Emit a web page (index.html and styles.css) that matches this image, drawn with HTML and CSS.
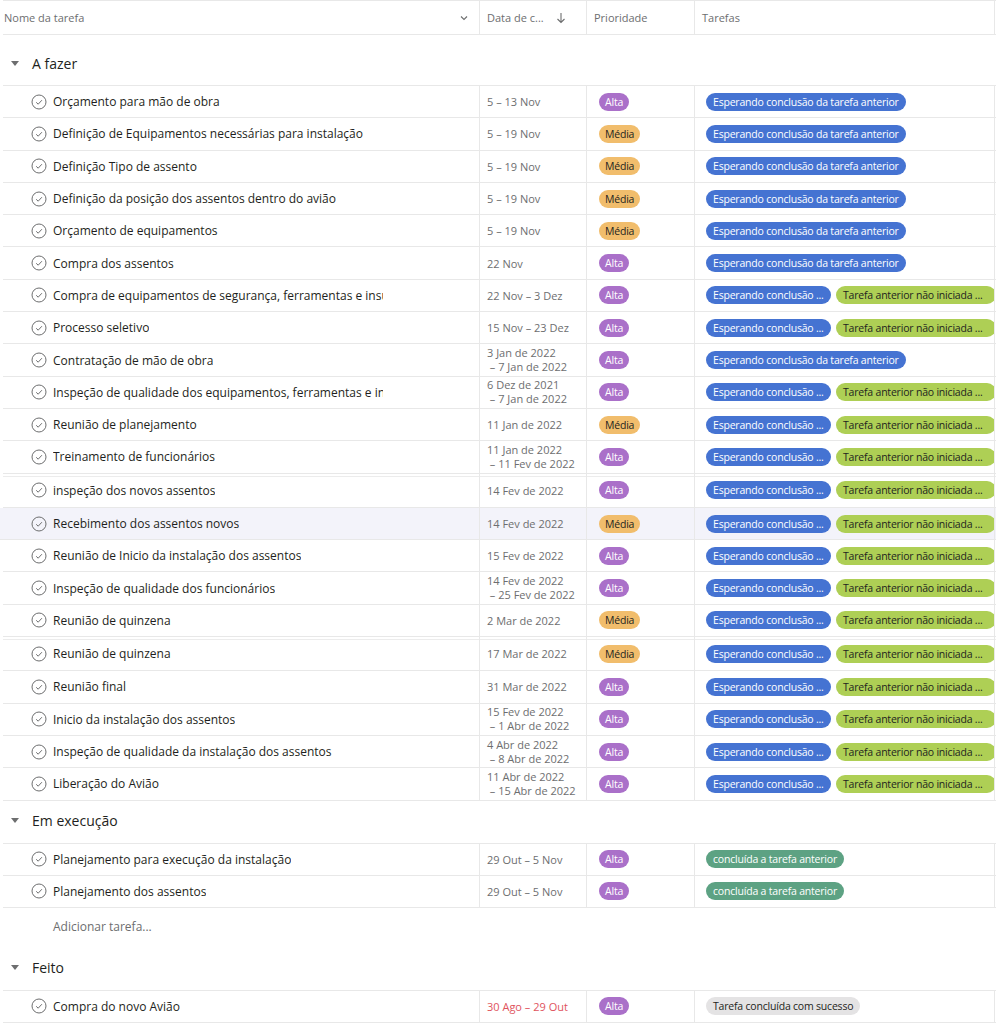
FILE: index.html
```
<!DOCTYPE html>
<html lang="pt">
<head>
<meta charset="utf-8">
<title>Tarefas</title>
<link rel="stylesheet" href="styles.css">
</head>
<body>
<div class="board">
  <div class="head">
    <div class="hcell hname">Nome da tarefa
      <svg class="chev" width="10" height="10" viewBox="0 0 10 10"><path d="M2 3.5 L5 6.5 L8 3.5" fill="none" stroke="#6d6e6f" stroke-width="1.1"/></svg>
    </div>
    <div class="hcell hdate">Data de c...
      <svg class="arrow" width="10" height="12" viewBox="0 0 10 12"><path d="M5 1 V10.5 M1.5 7 L5 10.5 L8.5 7" fill="none" stroke="#6d6e6f" stroke-width="1.1"/></svg>
    </div>
    <div class="hcell">Prioridade</div>
    <div class="hcell hlast">Tarefas</div>
  </div>

  <section class="group first">
    <div class="ghead"><span class="caret"></span>A fazer</div>
    <div class="rows dense">
      <div class="row"><div class="c name"><svg class="chk" viewBox="0 0 16 16"><circle cx="8" cy="8" r="7" fill="none" stroke="#6d6e6f"/><path d="M5.2 8.3 L7.2 10.2 L10.9 6.2" fill="none" stroke="#6d6e6f"/></svg><span class="t">Orçamento para mão de obra</span></div><div class="c date">5 – 13 Nov</div><div class="c pri"><span class="pill alta">Alta</span></div><div class="c tags"><span class="pill blue">Esperando conclusão da tarefa anterior</span></div></div>
      <div class="row"><div class="c name"><svg class="chk" viewBox="0 0 16 16"><circle cx="8" cy="8" r="7" fill="none" stroke="#6d6e6f"/><path d="M5.2 8.3 L7.2 10.2 L10.9 6.2" fill="none" stroke="#6d6e6f"/></svg><span class="t">Definição de Equipamentos necessárias para instalação</span></div><div class="c date">5 – 19 Nov</div><div class="c pri"><span class="pill media">Média</span></div><div class="c tags"><span class="pill blue">Esperando conclusão da tarefa anterior</span></div></div>
      <div class="row"><div class="c name"><svg class="chk" viewBox="0 0 16 16"><circle cx="8" cy="8" r="7" fill="none" stroke="#6d6e6f"/><path d="M5.2 8.3 L7.2 10.2 L10.9 6.2" fill="none" stroke="#6d6e6f"/></svg><span class="t">Definição Tipo de assento</span></div><div class="c date">5 – 19 Nov</div><div class="c pri"><span class="pill media">Média</span></div><div class="c tags"><span class="pill blue">Esperando conclusão da tarefa anterior</span></div></div>
      <div class="row"><div class="c name"><svg class="chk" viewBox="0 0 16 16"><circle cx="8" cy="8" r="7" fill="none" stroke="#6d6e6f"/><path d="M5.2 8.3 L7.2 10.2 L10.9 6.2" fill="none" stroke="#6d6e6f"/></svg><span class="t">Definição da posição dos assentos dentro do avião</span></div><div class="c date">5 – 19 Nov</div><div class="c pri"><span class="pill media">Média</span></div><div class="c tags"><span class="pill blue">Esperando conclusão da tarefa anterior</span></div></div>
      <div class="row"><div class="c name"><svg class="chk" viewBox="0 0 16 16"><circle cx="8" cy="8" r="7" fill="none" stroke="#6d6e6f"/><path d="M5.2 8.3 L7.2 10.2 L10.9 6.2" fill="none" stroke="#6d6e6f"/></svg><span class="t">Orçamento de equipamentos</span></div><div class="c date">5 – 19 Nov</div><div class="c pri"><span class="pill media">Média</span></div><div class="c tags"><span class="pill blue">Esperando conclusão da tarefa anterior</span></div></div>
      <div class="row"><div class="c name"><svg class="chk" viewBox="0 0 16 16"><circle cx="8" cy="8" r="7" fill="none" stroke="#6d6e6f"/><path d="M5.2 8.3 L7.2 10.2 L10.9 6.2" fill="none" stroke="#6d6e6f"/></svg><span class="t">Compra dos assentos</span></div><div class="c date">22 Nov</div><div class="c pri"><span class="pill alta">Alta</span></div><div class="c tags"><span class="pill blue">Esperando conclusão da tarefa anterior</span></div></div>
      <div class="row"><div class="c name"><svg class="chk" viewBox="0 0 16 16"><circle cx="8" cy="8" r="7" fill="none" stroke="#6d6e6f"/><path d="M5.2 8.3 L7.2 10.2 L10.9 6.2" fill="none" stroke="#6d6e6f"/></svg><span class="t">Compra de equipamentos de segurança, ferramentas e insumos</span></div><div class="c date">22 Nov – 3 Dez</div><div class="c pri"><span class="pill alta">Alta</span></div><div class="c tags"><span class="pill blue short">Esperando conclusão ...</span><span class="pill lime">Tarefa anterior não iniciada ...</span></div></div>
      <div class="row"><div class="c name"><svg class="chk" viewBox="0 0 16 16"><circle cx="8" cy="8" r="7" fill="none" stroke="#6d6e6f"/><path d="M5.2 8.3 L7.2 10.2 L10.9 6.2" fill="none" stroke="#6d6e6f"/></svg><span class="t">Processo seletivo</span></div><div class="c date">15 Nov – 23 Dez</div><div class="c pri"><span class="pill alta">Alta</span></div><div class="c tags"><span class="pill blue short">Esperando conclusão ...</span><span class="pill lime">Tarefa anterior não iniciada ...</span></div></div>
      <div class="row"><div class="c name"><svg class="chk" viewBox="0 0 16 16"><circle cx="8" cy="8" r="7" fill="none" stroke="#6d6e6f"/><path d="M5.2 8.3 L7.2 10.2 L10.9 6.2" fill="none" stroke="#6d6e6f"/></svg><span class="t">Contratação de mão de obra</span></div><div class="c date two">3 Jan de 2022<br>&nbsp;– 7 Jan de 2022</div><div class="c pri"><span class="pill alta">Alta</span></div><div class="c tags"><span class="pill blue">Esperando conclusão da tarefa anterior</span></div></div>
      <div class="row"><div class="c name"><svg class="chk" viewBox="0 0 16 16"><circle cx="8" cy="8" r="7" fill="none" stroke="#6d6e6f"/><path d="M5.2 8.3 L7.2 10.2 L10.9 6.2" fill="none" stroke="#6d6e6f"/></svg><span class="t">Inspeção de qualidade dos equipamentos, ferramentas e insumos</span></div><div class="c date two">6 Dez de 2021<br>&nbsp;– 7 Jan de 2022</div><div class="c pri"><span class="pill alta">Alta</span></div><div class="c tags"><span class="pill blue short">Esperando conclusão ...</span><span class="pill lime">Tarefa anterior não iniciada ...</span></div></div>
      <div class="row"><div class="c name"><svg class="chk" viewBox="0 0 16 16"><circle cx="8" cy="8" r="7" fill="none" stroke="#6d6e6f"/><path d="M5.2 8.3 L7.2 10.2 L10.9 6.2" fill="none" stroke="#6d6e6f"/></svg><span class="t">Reunião de planejamento</span></div><div class="c date">11 Jan de 2022</div><div class="c pri"><span class="pill media">Média</span></div><div class="c tags"><span class="pill blue short">Esperando conclusão ...</span><span class="pill lime">Tarefa anterior não iniciada ...</span></div></div>
      <div class="row"><div class="c name"><svg class="chk" viewBox="0 0 16 16"><circle cx="8" cy="8" r="7" fill="none" stroke="#6d6e6f"/><path d="M5.2 8.3 L7.2 10.2 L10.9 6.2" fill="none" stroke="#6d6e6f"/></svg><span class="t">Treinamento de funcionários</span></div><div class="c date two">11 Jan de 2022<br>&nbsp;– 11 Fev de 2022</div><div class="c pri"><span class="pill alta">Alta</span></div><div class="c tags"><span class="pill blue short">Esperando conclusão ...</span><span class="pill lime">Tarefa anterior não iniciada ...</span></div></div>
      <div class="row seam"><div class="c name"><svg class="chk" viewBox="0 0 16 16"><circle cx="8" cy="8" r="7" fill="none" stroke="#6d6e6f"/><path d="M5.2 8.3 L7.2 10.2 L10.9 6.2" fill="none" stroke="#6d6e6f"/></svg><span class="t">inspeção dos novos assentos</span></div><div class="c date">14 Fev de 2022</div><div class="c pri"><span class="pill alta">Alta</span></div><div class="c tags"><span class="pill blue short">Esperando conclusão ...</span><span class="pill lime">Tarefa anterior não iniciada ...</span></div></div>
      <div class="row hover"><div class="c name"><svg class="chk" viewBox="0 0 16 16"><circle cx="8" cy="8" r="7" fill="none" stroke="#6d6e6f"/><path d="M5.2 8.3 L7.2 10.2 L10.9 6.2" fill="none" stroke="#6d6e6f"/></svg><span class="t">Recebimento dos assentos novos</span></div><div class="c date">14 Fev de 2022</div><div class="c pri"><span class="pill media">Média</span></div><div class="c tags"><span class="pill blue short">Esperando conclusão ...</span><span class="pill lime">Tarefa anterior não iniciada ...</span></div></div>
      <div class="row"><div class="c name"><svg class="chk" viewBox="0 0 16 16"><circle cx="8" cy="8" r="7" fill="none" stroke="#6d6e6f"/><path d="M5.2 8.3 L7.2 10.2 L10.9 6.2" fill="none" stroke="#6d6e6f"/></svg><span class="t">Reunião de Inicio da instalação dos assentos</span></div><div class="c date">15 Fev de 2022</div><div class="c pri"><span class="pill alta">Alta</span></div><div class="c tags"><span class="pill blue short">Esperando conclusão ...</span><span class="pill lime">Tarefa anterior não iniciada ...</span></div></div>
      <div class="row"><div class="c name"><svg class="chk" viewBox="0 0 16 16"><circle cx="8" cy="8" r="7" fill="none" stroke="#6d6e6f"/><path d="M5.2 8.3 L7.2 10.2 L10.9 6.2" fill="none" stroke="#6d6e6f"/></svg><span class="t">Inspeção de qualidade dos funcionários</span></div><div class="c date two">14 Fev de 2022<br>&nbsp;– 25 Fev de 2022</div><div class="c pri"><span class="pill alta">Alta</span></div><div class="c tags"><span class="pill blue short">Esperando conclusão ...</span><span class="pill lime">Tarefa anterior não iniciada ...</span></div></div>
      <div class="row"><div class="c name"><svg class="chk" viewBox="0 0 16 16"><circle cx="8" cy="8" r="7" fill="none" stroke="#6d6e6f"/><path d="M5.2 8.3 L7.2 10.2 L10.9 6.2" fill="none" stroke="#6d6e6f"/></svg><span class="t">Reunião de quinzena</span></div><div class="c date">2 Mar de 2022</div><div class="c pri"><span class="pill media">Média</span></div><div class="c tags"><span class="pill blue short">Esperando conclusão ...</span><span class="pill lime">Tarefa anterior não iniciada ...</span></div></div>
      <div class="row seam"><div class="c name"><svg class="chk" viewBox="0 0 16 16"><circle cx="8" cy="8" r="7" fill="none" stroke="#6d6e6f"/><path d="M5.2 8.3 L7.2 10.2 L10.9 6.2" fill="none" stroke="#6d6e6f"/></svg><span class="t">Reunião de quinzena</span></div><div class="c date">17 Mar de 2022</div><div class="c pri"><span class="pill media">Média</span></div><div class="c tags"><span class="pill blue short">Esperando conclusão ...</span><span class="pill lime">Tarefa anterior não iniciada ...</span></div></div>
      <div class="row"><div class="c name"><svg class="chk" viewBox="0 0 16 16"><circle cx="8" cy="8" r="7" fill="none" stroke="#6d6e6f"/><path d="M5.2 8.3 L7.2 10.2 L10.9 6.2" fill="none" stroke="#6d6e6f"/></svg><span class="t">Reunião final</span></div><div class="c date">31 Mar de 2022</div><div class="c pri"><span class="pill alta">Alta</span></div><div class="c tags"><span class="pill blue short">Esperando conclusão ...</span><span class="pill lime">Tarefa anterior não iniciada ...</span></div></div>
      <div class="row"><div class="c name"><svg class="chk" viewBox="0 0 16 16"><circle cx="8" cy="8" r="7" fill="none" stroke="#6d6e6f"/><path d="M5.2 8.3 L7.2 10.2 L10.9 6.2" fill="none" stroke="#6d6e6f"/></svg><span class="t">Inicio da instalação dos assentos</span></div><div class="c date two">15 Fev de 2022<br>&nbsp;– 1 Abr de 2022</div><div class="c pri"><span class="pill alta">Alta</span></div><div class="c tags"><span class="pill blue short">Esperando conclusão ...</span><span class="pill lime">Tarefa anterior não iniciada ...</span></div></div>
      <div class="row"><div class="c name"><svg class="chk" viewBox="0 0 16 16"><circle cx="8" cy="8" r="7" fill="none" stroke="#6d6e6f"/><path d="M5.2 8.3 L7.2 10.2 L10.9 6.2" fill="none" stroke="#6d6e6f"/></svg><span class="t">Inspeção de qualidade da instalação dos assentos</span></div><div class="c date two">4 Abr de 2022<br>&nbsp;– 8 Abr de 2022</div><div class="c pri"><span class="pill alta">Alta</span></div><div class="c tags"><span class="pill blue short">Esperando conclusão ...</span><span class="pill lime">Tarefa anterior não iniciada ...</span></div></div>
      <div class="row"><div class="c name"><svg class="chk" viewBox="0 0 16 16"><circle cx="8" cy="8" r="7" fill="none" stroke="#6d6e6f"/><path d="M5.2 8.3 L7.2 10.2 L10.9 6.2" fill="none" stroke="#6d6e6f"/></svg><span class="t">Liberação do Avião</span></div><div class="c date two">11 Abr de 2022<br>&nbsp;– 15 Abr de 2022</div><div class="c pri"><span class="pill alta">Alta</span></div><div class="c tags"><span class="pill blue short">Esperando conclusão ...</span><span class="pill lime">Tarefa anterior não iniciada ...</span></div></div>
    </div>
  </section>

  <section class="group">
    <div class="ghead"><span class="caret"></span>Em execução</div>
    <div class="rows">
      <div class="row"><div class="c name"><svg class="chk" viewBox="0 0 16 16"><circle cx="8" cy="8" r="7" fill="none" stroke="#6d6e6f"/><path d="M5.2 8.3 L7.2 10.2 L10.9 6.2" fill="none" stroke="#6d6e6f"/></svg><span class="t">Planejamento para execução da instalação</span></div><div class="c date">29 Out – 5 Nov</div><div class="c pri"><span class="pill alta">Alta</span></div><div class="c tags"><span class="pill green">concluída a tarefa anterior</span></div></div>
      <div class="row"><div class="c name"><svg class="chk" viewBox="0 0 16 16"><circle cx="8" cy="8" r="7" fill="none" stroke="#6d6e6f"/><path d="M5.2 8.3 L7.2 10.2 L10.9 6.2" fill="none" stroke="#6d6e6f"/></svg><span class="t">Planejamento dos assentos</span></div><div class="c date">29 Out – 5 Nov</div><div class="c pri"><span class="pill alta">Alta</span></div><div class="c tags"><span class="pill green">concluída a tarefa anterior</span></div></div>
    </div>
    <div class="addrow">Adicionar tarefa...</div>
  </section>

  <section class="group">
    <div class="ghead"><span class="caret"></span>Feito</div>
    <div class="rows">
      <div class="row"><div class="c name"><svg class="chk" viewBox="0 0 16 16"><circle cx="8" cy="8" r="7" fill="none" stroke="#6d6e6f"/><path d="M5.2 8.3 L7.2 10.2 L10.9 6.2" fill="none" stroke="#6d6e6f"/></svg><span class="t">Compra do novo Avião</span></div><div class="c date late">30 Ago – 29 Out</div><div class="c pri"><span class="pill alta">Alta</span></div><div class="c tags"><span class="pill grey">Tarefa concluída com sucesso</span></div></div>
    </div>
  </section>
</div>
</body>
</html>
```

FILE: styles.css
```
* { box-sizing: border-box; }
html, body { margin: 0; padding: 0; background: #fff; }
body {
  font-family: "Open Sans", "Noto Sans", sans-serif;
  color: #1e1f21;
  width: 996px;
  overflow: hidden;
}
.board { width: 996px; }

.head {
  display: grid;
  grid-template-columns: 477px 107px 108px 300px;
  margin-left: 3px;
  height: 35px;
  border-top: 1px solid #e8e8e8;
  border-bottom: 1px solid #e8e8e8;
  font-size: 11px;
  color: #6d6e6f;
}
.hcell {
  display: flex;
  align-items: center;
  padding-left: 7px;
  border-right: 1px solid #e8e8e8;
  white-space: nowrap;
}
.hname { padding-left: 1px; padding-right: 10px; justify-content: space-between; }
.hdate .arrow { margin-left: 12px; }
.chev { display: block; }

.group.first { padding-top: 8px; }
.ghead {
  height: 42px;
  display: flex;
  align-items: center;
  padding-left: 11px;
  padding-bottom: 2px;
  font-size: 14px;
  font-weight: 500;
}
.caret {
  width: 0; height: 0;
  border-left: 4px solid transparent;
  border-right: 4px solid transparent;
  border-top: 5px solid #6d6e6f;
  margin-right: 13px;
}

.rows { margin-left: 3px; border-top: 1px solid #e8e8e8; }
.row {
  display: grid;
  grid-template-columns: 477px 107px 108px 300px;
  height: 32px;
  border-bottom: 1px solid #e8e8e8;
  font-size: 12px;
}
.rows.dense .row { height: 32.3px; }
.rows.dense .row.seam { height: 34.3px; box-shadow: inset 0 2px 0 #fff, inset 0 3px 0 #ececec; }
.row.hover { background: #f3f3fa; margin-left: -3px; padding-left: 3px; width: 996px; }

.c {
  display: flex;
  align-items: center;
  border-right: 1px solid #e8e8e8;
  overflow: hidden;
  white-space: nowrap;
}
.name { padding-left: 28px; }
.chk { width: 16px; height: 16px; flex: none; margin-right: 6px; }
.t { display: block; max-width: 330px; overflow: hidden; white-space: nowrap; }

.date { padding-left: 7px; font-size: 11px; color: #6d6e6f; }
.date.two { line-height: 14px; }
.date.late { color: #e0535d; }

.pri { padding-left: 12px; }
.tags { padding-left: 11px; gap: 5px; }

.pill {
  display: inline-flex;
  align-items: center;
  height: 18px;
  border-radius: 9px;
  padding: 0 7px;
  font-size: 10.5px;
  letter-spacing: -0.2px;
  white-space: nowrap;
  flex: none;
}
.alta { background: #aa70c9; color: #fff; padding: 0 6px; }
.media { background: #f1bd6c; color: #1e1f21; padding: 0 6px; }
.blue { background: #4573d2; color: #fff; }
.blue.short { width: 125px; }
.lime { background: #aecf55; color: #1e1f21; width: 160px; }
.green { background: #5da283; color: #fff; }
.grey { background: #e4e3e4; color: #1e1f21; }

.addrow {
  height: 40px;
  padding-left: 53px;
  padding-top: 10px;
  font-size: 12px;
  color: #6d6e6f;
}
```
